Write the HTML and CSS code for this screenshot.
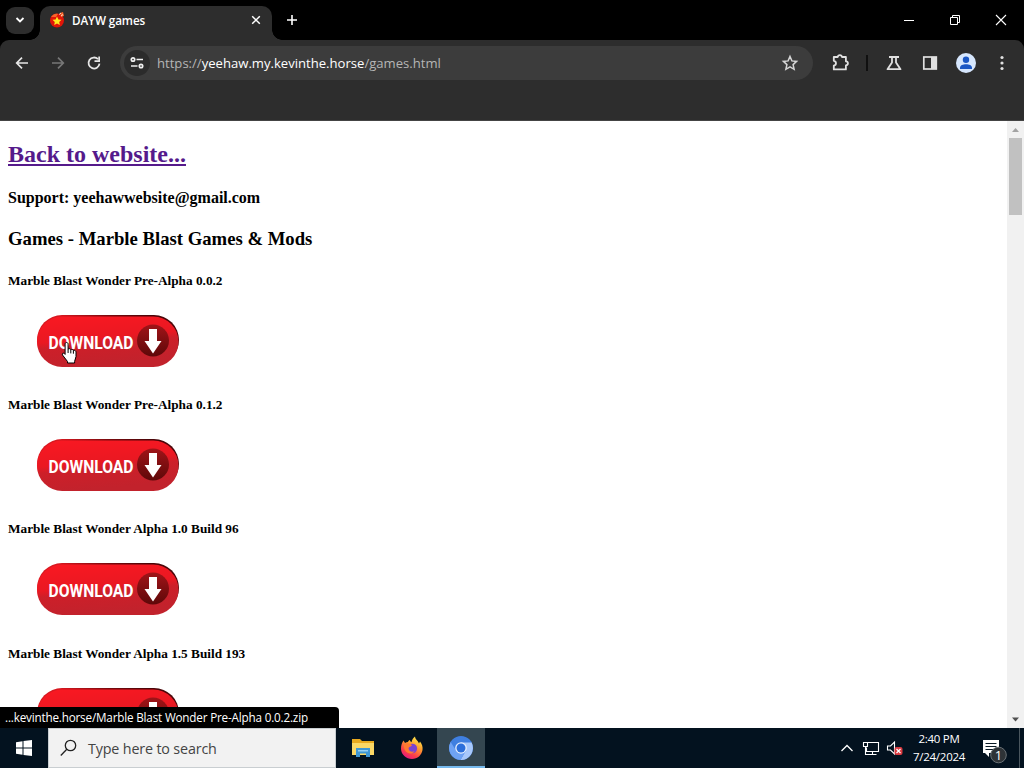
FILE: index.html
```
<!DOCTYPE html>
<html lang="en">
<head>
  <meta charset="UTF-8">
  <meta name="viewport" content="width=device-width, initial-scale=1.0">
  <title>DAYW games</title>
  <link rel="stylesheet" href="styles.css">
</head>
<body>

<!-- shared shapes -->
<svg class="defs" width="0" height="0">
  <defs>
    <linearGradient id="red" x1="0" y1="0" x2="0.25" y2="1">
      <stop offset="0" stop-color="#fa1822"/>
      <stop offset="0.5" stop-color="#ea1822"/>
      <stop offset="0.62" stop-color="#cd1f29"/>
      <stop offset="1" stop-color="#c2222c"/>
    </linearGradient>
    <linearGradient id="edge" x1="0" y1="0" x2="1" y2="0">
      <stop offset="0.15" stop-color="#d81820"/>
      <stop offset="0.5" stop-color="#7c0a0e"/>
      <stop offset="0.8" stop-color="#4a0508"/>
    </linearGradient>
    <linearGradient id="disc" x1="0" y1="0" x2="0" y2="1">
      <stop offset="0" stop-color="#a01418"/>
      <stop offset="1" stop-color="#5e0809"/>
    </linearGradient>
    <symbol id="download" viewBox="0 0 150 60">
      <rect x="2" y="2" width="142" height="50" rx="25" fill="url(#edge)"/>
      <rect x="2" y="3.5" width="141.5" height="50.5" rx="25.2" fill="url(#red)"/>
      <circle cx="118" cy="27.5" r="16" fill="url(#disc)"/>
      <path d="M114 16h8v12h4.500L118 40.500 109.500 28h4.500z" fill="#fff"/>
      <text x="13.500" y="35.500" textLength="85" lengthAdjust="spacingAndGlyphs" class="download-text">DOWNLOAD</text>
    </symbol>
  </defs>
</svg>

<div class="titlebar">
  <div class="tab-search">
    <svg width="28" height="28" viewBox="0 0 28 28"><path d="M10.500 11l3.500 3.500 3.500-3.500" fill="none" stroke="#fff" stroke-width="1.800"/></svg>
  </div>
  <div class="tab">
    <svg width="16" height="16" viewBox="0 0 16 16">
      <circle cx="8" cy="8.500" r="7" fill="#e01508"/>
      <path d="M2 5c2-3 5-4 7-3l-2 3zM11 1l3-1 1 4-3 1z" fill="#f7642a"/>
      <path d="M10 2.500l2-1.500M12 4l2-1.500" stroke="#ffd6c0"/>
      <path d="M8 4.500l1.400 2.900 3.100.4-2.300 2.100.6 3.100L8 11.500 5.200 13l.6-3.100-2.300-2.100 3.100-.4z" fill="#ffe81f"/>
    </svg>
    <span class="tab-title">DAYW games</span>
    <svg width="16" height="16" viewBox="0 0 16 16"><path d="M4.200 4.200l7.600 7.600M11.800 4.200l-7.600 7.600" stroke="#fff" stroke-width="1.500"/></svg>
  </div>
  <svg class="new-tab" width="16" height="16" viewBox="0 0 16 16"><path d="M8 3v10M3 8h10" stroke="#fff" stroke-width="1.600"/></svg>
  <div class="window-controls">
    <svg width="46" height="40" viewBox="0 0 46 40"><path d="M18 20.500h10" stroke="#fff"/></svg>
    <svg width="46" height="40" viewBox="0 0 46 40"><path d="M18.500 17.500h7v7h-7zM20.500 17.500v-2h7v7h-2" fill="none" stroke="#fff"/></svg>
    <svg width="46" height="40" viewBox="0 0 46 40"><path d="M18 15l10 10M28 15L18 25" stroke="#fff" stroke-width="1.100"/></svg>
  </div>
</div>

<div class="toolbar">
  <div class="nav">
    <svg width="36" height="36" viewBox="0 0 36 36"><path d="M24 18H13M18 12.700L12.700 18l5.300 5.300" fill="none" stroke="#e6e6e6" stroke-width="1.700"/></svg>
    <svg width="36" height="36" viewBox="0 0 36 36"><path d="M12 18h11M18 12.700l5.300 5.300-5.300 5.300" fill="none" stroke="#777" stroke-width="1.700"/></svg>
    <svg width="36" height="36" viewBox="0 0 36 36"><path d="M22 14.200A5.500 5.500 0 1 0 23.500 18.700" fill="none" stroke="#e6e6e6" stroke-width="1.800"/><path d="M24 11.500v5.500h-5.500v-1.700h3.800v-3.800z" fill="#e6e6e6"/></svg>
  </div>
  <div class="omnibox">
    <span class="site-info">
      <svg width="16" height="16" viewBox="0 0 16 16" fill="none" stroke="#eee" stroke-width="1.700"><circle cx="4" cy="4.500" r="1.700"/><path d="M7.500 4.500H14M2 11h6.500"/><circle cx="12" cy="11" r="1.700"/></svg>
    </span>
    <span class="url">https://<b>yeehaw.my.kevinthe.horse</b>/games.html</span>
    <svg width="18" height="18" viewBox="0 0 18 18"><path d="M9 2.500l1.900 4.400 4.700.5-3.500 3.200 1 4.700L9 12.800l-4.100 2.500 1-4.700-3.500-3.200 4.700-.5z" fill="none" stroke="#d5d5d5" stroke-width="1.500"/></svg>
  </div>
  <div class="actions">
    <svg width="36" height="36" viewBox="0 0 36 36"><path d="M10.800 12h4c.2-2.600 3.900-2.600 4.100 0h4v4.300c2.700.2 2.700 3.900 0 4.100v4H10.800v-3.800c2.900-.6 2.900-4.200 0-4.800z" fill="none" stroke="#e0e0e0" stroke-width="1.800" stroke-linejoin="round"/></svg>
    <span class="divider"></span>
    <svg width="36" height="36" viewBox="0 0 36 36"><path d="M13 12h10M16 12v5.500l-4.500 6.700h13L20 17.500V12" fill="none" stroke="#e0e0e0" stroke-width="1.800" stroke-linejoin="round"/></svg>
    <svg width="36" height="36" viewBox="0 0 36 36"><rect x="11.800" y="12" width="12.500" height="12" fill="none" stroke="#e0e0e0" stroke-width="1.700"/><path d="M19 12h6v12h-6z" fill="#e0e0e0"/></svg>
    <svg width="36" height="36" viewBox="0 0 36 36"><circle cx="18" cy="18" r="10" fill="#d6e6fd"/><circle cx="18" cy="14.800" r="3.200" fill="#1a56c4"/><path d="M12 24v-1c0-2.800 3-3.800 6-3.800s6 1 6 3.800v1z" fill="#1a56c4"/></svg>
    <svg width="36" height="36" viewBox="0 0 36 36" fill="#e0e0e0"><circle cx="18" cy="12.500" r="1.600"/><circle cx="18" cy="18" r="1.600"/><circle cx="18" cy="23.500" r="1.600"/></svg>
  </div>
</div>
<div class="bookmarks"></div>

<div class="viewport">
  <div class="page">
    <h2><a href="#">Back to website...</a></h2>
    <h4>Support: yeehawwebsite@gmail.com</h4>
    <h3>Games - Marble Blast Games &amp; Mods</h3>
    <h5>Marble Blast Wonder Pre-Alpha 0.0.2</h5>
    <div class="download"><svg width="150" height="60"><use href="#download"/></svg></div>
    <h5>Marble Blast Wonder Pre-Alpha 0.1.2</h5>
    <div class="download"><svg width="150" height="60"><use href="#download"/></svg></div>
    <h5>Marble Blast Wonder Alpha 1.0 Build 96</h5>
    <div class="download"><svg width="150" height="60"><use href="#download"/></svg></div>
    <h5>Marble Blast Wonder Alpha 1.5 Build 193</h5>
    <div class="download"><svg width="150" height="60"><use href="#download"/></svg></div>
  </div>
  <div class="scrollbar">
    <svg width="17" height="17" viewBox="0 0 17 17"><path d="M5 11l3.500-4 3.500 4z" fill="#a3a3a3"/></svg>
    <div class="thumb"></div>
    <svg width="17" height="17" viewBox="0 0 17 17"><path d="M5 6.500l3.500 4 3.500-4z" fill="#505050"/></svg>
  </div>
  <div class="status">...kevinthe.horse/Marble Blast Wonder Pre-Alpha 0.0.2.zip</div>
</div>

<div class="taskbar">
  <svg class="start" width="48" height="40" viewBox="0 0 48 40" fill="#fff"><path d="M16 14.200l6.500-.9v6.200H16zM23.500 13.100L32 12v7.500h-8.500zM16 20.500h6.500v6.200l-6.500-.9zM23.500 20.500H32V28l-8.500-1.100z"/></svg>
  <div class="search">
    <svg width="18" height="18" viewBox="0 0 18 18" fill="none" stroke="#222" stroke-width="1.300"><circle cx="10.500" cy="6.500" r="5.200"/><path d="M6.800 10.200L.8 16.500"/></svg>
    <span>Type here to search</span>
  </div>
  <div class="apps">
    <div class="app">
      <svg width="24" height="24" viewBox="0 0 24 24"><path d="M1 3h8l2 2h12v14H1z" fill="#e9aa1f"/><path d="M1 7h22v12H1z" fill="#fbd866"/><path d="M5 12h14v9h-4v-3.500H9V21H5z" fill="#3f97d4"/><path d="M7 14h10v1.500H7z" fill="#96d0f4"/></svg>
    </div>
    <div class="app">
      <svg width="24" height="24" viewBox="0 0 24 24">
        <defs><linearGradient id="fox" x1="0.8" y1="0" x2="0.25" y2="1"><stop offset="0" stop-color="#fff44f"/><stop offset="0.4" stop-color="#ff9a2e"/><stop offset="0.75" stop-color="#fb3b4b"/><stop offset="1" stop-color="#e31587"/></linearGradient></defs>
        <path d="M3.500 4.500L5 7c1-.8 2-1 3-1 .4-1 1-1.700 2-2 0 1 .5 1.600 1.500 2.200C12 4 13 2 15 .5c.2 3 3 4 4 7l1-2c2 2.500 3 5.500 2.500 8.500-.8 5-5 9-10.500 9C6 23 1.300 18.500 1 13 .9 9.500 2 6.500 3.500 4.500z" fill="url(#fox)"/>
        <circle cx="12.300" cy="12.500" r="4.800" fill="#7b43d2"/>
        <path d="M4 9c3-2.500 5.500-2 8 .2-1 1.500-3 1.500-3.500 2.800 0 3 3 4.500 6 3.200-2 3.300-7 2.800-9-.2-1.300-2-1.800-4-1.500-6z" fill="#ff7a30"/>
      </svg>
    </div>
    <div class="app active">
      <svg width="24" height="24" viewBox="0 0 24 24"><circle cx="12" cy="12" r="12" fill="#3f7fe0"/><path d="M12 6.500h10.600A12 12 0 0 1 11.500 24l5.300-9.200z" fill="#a8c8fb"/><path d="M1.700 5.900A12 12 0 0 0 11.500 24l5.300-9.200-9.600 0z" fill="#6ea2f4"/><circle cx="12" cy="12" r="5.800" fill="#e8f0fe"/><circle cx="12" cy="12" r="4.500" fill="#2c6fdb"/></svg>
    </div>
  </div>
  <div class="tray">
    <svg width="24" height="24" viewBox="0 0 24 24"><path d="M6.500 15L12 9.500l5.500 5.500" fill="none" stroke="#fff" stroke-width="1.300"/></svg>
    <svg width="24" height="24" viewBox="0 0 24 24" fill="none" stroke="#fff" stroke-width="1.100"><path d="M9 6.500h10.500v9H7.500v-4M13.500 15.500v3M9.500 18.500h8M4.500 6.500h4v4h-4zM6.500 10.500v8h3"/></svg>
    <svg width="24" height="24" viewBox="0 0 24 24"><path d="M4.500 10h3l4-4v12l-4-4h-3z" fill="none" stroke="#fff" stroke-width="1.100"/><rect x="11.500" y="11" width="8" height="8" rx="2" fill="#d93a40"/><path d="M13.500 13l4 4M17.500 13l-4 4" stroke="#fff" stroke-width="1.200"/></svg>
    <div class="clock"><span>2:40 PM</span><span>7/24/2024</span></div>
    <svg width="38" height="40" viewBox="0 0 38 40"><path d="M12 12h16v13H18v4l-4-4h-2z" fill="#fff"/><path d="M14.500 15.500h11M14.500 18.500h11M14.500 21.500h11" stroke="#0a1a26"/><circle cx="27.500" cy="27" r="7.800" fill="#2e3337" stroke="#697075"/><text x="27.500" y="31.500" text-anchor="middle" class="badge-text">1</text></svg>
    <span class="show-desktop"></span>
  </div>
</div>

<svg class="cursor" width="18" height="24" viewBox="0 0 18 24"><path d="M5.500 1.500c1 0 1.600.7 1.600 1.600v5c.8-.8 2.400-.5 2.700.6.9-.6 2.300-.2 2.600.8 1.200-.5 2.600.2 2.600 1.600v4.400c0 2-1.400 3-1.400 5v1.500H6.500V20.500L1.500 14c-.8-1.300.7-2.500 1.800-1.500l.8.900V3.100c0-1 .5-1.600 1.400-1.600z" fill="#fff" stroke="#000" stroke-width="1"/><path d="M7.100 8v4M9.800 8.900v3.500M12.400 9.700v3" stroke="#000"/></svg>

</body>
</html>
```
FILE: styles.css
```
* {
  box-sizing: border-box;
}
body {
  display: flex;
  flex-direction: column;
  width: 1024px;
  height: 768px;
  margin: 0;
  overflow: hidden;
  background-color: #000;
  font-family: "Open Sans", "Noto Sans", sans-serif;
  font-size: 12px;
  color: #fff;
}
svg {
  display: block;
  flex: none;
}
.defs {
  position: absolute;
}

/* tab strip */
.titlebar {
  display: flex;
  height: 40px;
  flex: none;
}
.tab-search {
  width: 28px;
  height: 27px;
  margin: 7px 6px 0;
  border-radius: 9px;
  background-color: #2d2d2d;
}
.tab {
  position: relative;
  display: flex;
  align-items: center;
  width: 232px;
  height: 34px;
  margin-top: 6px;
  padding: 0 8px 6px 9px;
  border-radius: 10px 10px 0 0;
  background-color: #2d2d2d;
}
.tab::before,
.tab::after {
  content: "";
  position: absolute;
  bottom: 0;
  width: 10px;
  height: 10px;
}
.tab::before {
  left: -10px;
  background: radial-gradient(circle at 0 0, transparent 9.5px, #2d2d2d 10px);
}
.tab::after {
  right: -10px;
  background: radial-gradient(circle at 100% 0, transparent 9.5px, #2d2d2d 10px);
}
.tab-title {
  flex: 1;
  margin-left: 7px;
  font-weight: 600;
  font-size: 11.7px;
  letter-spacing: -0.1px;
}
.new-tab {
  margin: 12px 0 0 12px;
}
.window-controls {
  display: flex;
  margin-left: auto;
}

/* toolbar */
.toolbar {
  display: flex;
  align-items: center;
  height: 46px;
  flex: none;
  padding: 0 4px;
  border-radius: 9px 9px 0 0;
  background-color: #2d2d2d;
}
.nav,
.actions {
  display: flex;
  align-items: center;
}
.omnibox {
  display: flex;
  align-items: center;
  width: 693px;
  height: 34px;
  margin: 0 10px 0 8px;
  padding: 0 14px 0 4px;
  border-radius: 17px;
  background-color: #3c3c3c;
}
.site-info {
  display: flex;
  align-items: center;
  justify-content: center;
  width: 26px;
  height: 26px;
  border-radius: 50%;
  background-color: #2b2b2b;
}
.url {
  flex: 1;
  margin-left: 7px;
  font-size: 13.1px;
  color: #b5b5b5;
}
.url b {
  font-weight: normal;
  color: #fff;
}
.divider {
  width: 2px;
  height: 16px;
  margin: 0 8px 0 7px;
  background-color: #101010;
}
.bookmarks {
  height: 35px;
  flex: none;
  background-color: #2d2d2d;
  border-bottom: 1px solid #444;
}

/* web page */
.viewport {
  position: relative;
  display: flex;
  height: 607px;
  flex: none;
  background-color: #fff;
}
.page {
  flex: 1;
  overflow: hidden;
  padding: 0 8px;
  font-family: "Liberation Serif", "Times New Roman", serif;
  font-size: 16px;
  color: #000;
}
.page a {
  color: #551a8b;
}
.download {
  height: 64px;
  padding: 2px 0 0 27px;
}
.download-text {
  font: bold 19px "Roboto", sans-serif;
  fill: #fff;
}
.scrollbar {
  display: flex;
  flex-direction: column;
  width: 17px;
  background-color: #f1f1f1;
}
.scrollbar .thumb {
  height: 77px;
  margin: 0 2px auto;
  background-color: #c1c1c1;
}
.status {
  position: absolute;
  left: 0;
  bottom: 0;
  width: 339px;
  height: 21px;
  padding-left: 5px;
  border-top-right-radius: 4px;
  background-color: #000;
  font-size: 11.7px;
  line-height: 21px;
  letter-spacing: -0.18px;
  white-space: nowrap;
}

/* taskbar */
.taskbar {
  display: flex;
  height: 40px;
  flex: none;
  background-color: #03121f;
}
.search {
  display: flex;
  align-items: center;
  width: 288px;
  padding-left: 11px;
  border: 1px solid #c9ced1;
  background-color: #f2f2f2;
  font-size: 14.3px;
  letter-spacing: -0.15px;
  color: #444;
}
.search span {
  margin-left: 10px;
}
.apps {
  display: flex;
  gap: 1px;
  margin-left: 3px;
}
.app {
  display: flex;
  align-items: center;
  justify-content: center;
  width: 48px;
}
.app.active {
  background-color: #344650;
  border-bottom: 2px solid #76b9ed;
  padding-top: 2px;
}
.tray {
  display: flex;
  align-items: center;
  margin-left: auto;
}
.clock {
  display: flex;
  flex-direction: column;
  align-items: center;
  width: 64px;
  font-size: 11.5px;
  line-height: 18px;
  letter-spacing: -0.25px;
}
.badge-text {
  font-size: 13px;
  fill: #fff;
}
.show-desktop {
  width: 5px;
  height: 40px;
  margin-left: 10px;
  border-left: 1px solid #4a565e;
}

/* mouse pointer */
.cursor {
  position: absolute;
  left: 61px;
  top: 341px;
}
```
